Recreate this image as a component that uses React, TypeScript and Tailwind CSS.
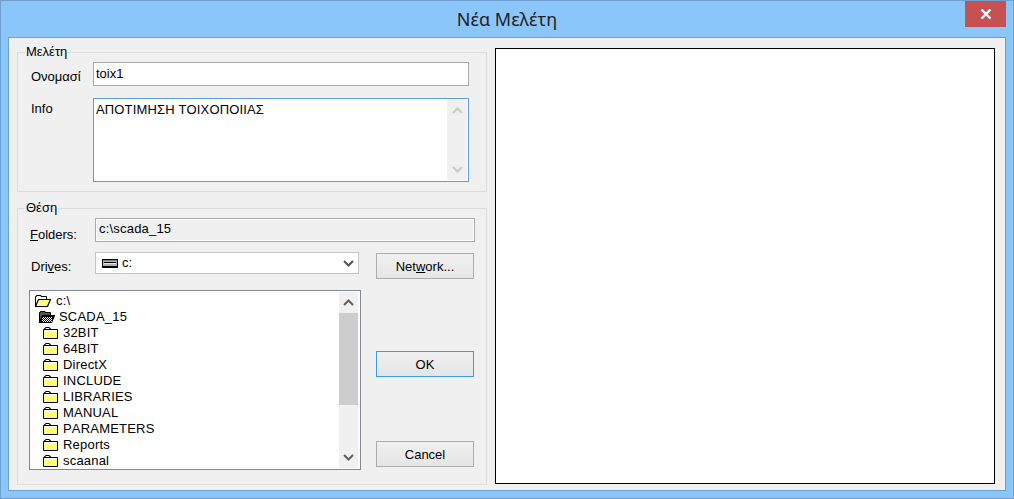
const FOLDERS = ["32BIT", "64BIT", "DirectX", "INCLUDE", "LIBRARIES", "MANUAL", "PARAMETERS", "Reports", "scaanal"];

function Chevron({ up, className }: { up?: boolean; className: string }) {
  return (
    <svg width="11" height="7" viewBox="0 0 11 7" className={className}>
      <path d={up ? "M1 6L5.5 1.5L10 6" : "M1 1L5.5 5.5L10 1"} fill="none" stroke="currentColor" strokeWidth="2" />
    </svg>
  );
}

// checkerboard fill for the dark open folder
function dots(x0: number, y0: number, w: number, h: number) {
  let d = "";
  for (let y = y0; y < y0 + h; y++) {
    for (let x = x0; x < x0 + w; x++) {
      if ((x + y) % 2 === 0) d += `M${x} ${y}h1v1h-1z`;
    }
  }
  return d;
}

function ClosedFolder() {
  return (
    <svg width="15" height="12" viewBox="0 0 15 12" className="shrink-0">
      <path d="M1.5 3V1.5H2.5V0.5H6.5V1.5H7.5V3" fill="#ffffff" stroke="#000" />
      <path d="M0.5 2.5H14.5V11.5H0.5Z" fill="#ffff80" stroke="#000" />
      <path d="M1 3.5H14" stroke="#fff" />
    </svg>
  );
}

function OpenFolder({ dark }: { dark?: boolean }) {
  return (
    <svg width="16" height="12" viewBox="0 0 16 12" className="shrink-0">
      <path d="M0.5 11.5V1.5H1.5V0.5H6V1.5H11.5V4.5" fill={dark ? "#555" : "#fff"} stroke="#000" />
      <path d="M0.5 11.5L3.5 4.5H15.5L12.5 11.5Z" fill={dark ? "#000" : "#ffff80"} stroke="#000" strokeWidth="1.2" />
      {dark && <path d={dots(3, 6, 10, 5)} fill="#ffffff" />}
    </svg>
  );
}

function DriveIcon() {
  return (
    <svg width="16" height="9" viewBox="0 0 16 9" shapeRendering="crispEdges" className="shrink-0">
      <rect x="0.5" y="0.5" width="15" height="8" fill="#b0b0b0" stroke="#000" />
      <path d="M2 3.5H14" stroke="#000" />
      <path d="M2 4.5H14" stroke="#e8e8e8" />
      <path d="M1 7.5H15" stroke="#000" />
      <path d="M1 1.5H15" stroke="#808080" />
    </svg>
  );
}

function Btn({ children, active, className }: { children: React.ReactNode; active?: boolean; className?: string }) {
  return (
    <button
      className={`block w-[98px] h-[26px] pt-[1px] text-[13px] text-black bg-gradient-to-b from-[#f0f0f0] to-[#e5e5e5] border ${active ? "border-[#3c9bf0]" : "border-[#acacac]"} ${className ?? ""}`}
    >
      {children}
    </button>
  );
}

export default function App() {
  return (
    <div className="w-[1014px] h-[499px] flex flex-col bg-[#8bc6fb] border border-[#6f9fd0] text-[13px] text-black font-['Liberation_Sans',sans-serif] [font-kerning:none] overflow-hidden">
      <div className="relative h-[36px] shrink-0 flex items-center justify-center">
        <span className="text-[18px] text-[#222] font-['Noto_Sans',sans-serif]">Νέα Μελέτη</span>
        <button className="absolute top-0 right-[7px] w-[41px] h-[26px] flex items-center justify-center bg-[#c75050]">
          <svg width="12" height="10" viewBox="0 0 12 10">
            <path d="M1.5 0.5L10.5 9.5M10.5 0.5L1.5 9.5" stroke="#fff" strokeWidth="2.4" fill="none" />
          </svg>
        </button>
      </div>

      <div className="mx-[7px] h-[454px] border border-[#6f9fd0] bg-[#f0f0f0] flex pl-[8px] pr-[9px] pt-[7px] gap-[8px]">
        <div className="w-[470px] shrink-0 flex flex-col gap-[9px]">
          <fieldset className="h-[147px] border border-[#dcdcdc]">
            <legend className="ml-[7px] px-[1px] leading-[14px]">Μελέτη</legend>
            <div className="pl-[13px]">
              <div className="flex h-[24px] mt-[3px]">
                <span className="w-[62px] pt-[5px]">Ονομασί</span>
                <input
                  readOnly
                  value="toix1"
                  className="w-[376px] h-[24px] border border-[#ababab] bg-white px-[2px] pb-[2px] outline-none"
                />
              </div>
              <div className="flex mt-[12px] h-[84px]">
                <span className="w-[62px] pt-[1px]">Info</span>
                <div className="w-[376px] h-[84px] border border-[#5b9bdf] bg-white flex justify-between pl-[2px]">
                  <span className="pt-[1px] tracking-[0.15px]">ΑΠΟΤΙΜΗΣΗ ΤΟΙΧΟΠΟΙΙΑΣ</span>
                  <div className="w-[20px] mt-[1px] mb-[1px] mr-[1px] bg-[#f0f0f0] flex flex-col items-center justify-between py-[7px] text-[#c8c8c8]">
                    <Chevron up className="block" />
                    <Chevron className="block" />
                  </div>
                </div>
              </div>
            </div>
          </fieldset>

          <fieldset className="h-[284px] border border-[#dcdcdc]">
            <legend className="ml-[7px] px-[1px] leading-[14px]">Θέση</legend>
            <div className="pl-[11px]">
              <div className="flex h-[24px] mt-[3px]">
                <span className="w-[66px] pt-[7px] pl-[1px]"><u>F</u>olders:</span>
                <div className="w-[380px] h-[24px] border border-[#ababab] bg-[#f0f0f0] pl-[3px] leading-[20px] tracking-[0.2px] shadow-[inset_0_0_0_1px_#fff]">c:\scada_15</div>
              </div>
              <div className="flex mt-[10px]">
                <div className="w-[332px] shrink-0">
                  <div className="flex h-[22px]">
                    <span className="w-[66px] pt-[5px] pl-[2px]">Dri<u>v</u>es:</span>
                    <div className="w-[264px] h-[22px] border border-[#c4c4c4] bg-white flex items-center pl-[6px] pr-[3px]">
                      <DriveIcon />
                      <span className="ml-[4px]">c:</span>
                      <Chevron className="ml-auto mr-[1px] text-[#555]" />
                    </div>
                  </div>
                  <div className="mt-[16px] h-[180px] border border-[#828790] bg-white flex justify-between p-[1px]">
                    <div className="pl-[4px] pt-[1px] overflow-hidden tracking-[0.2px] leading-[16px]">
                      <div className="h-[16px] flex items-center gap-[5px]">
                        <OpenFolder />
                        <span>c:\</span>
                      </div>
                      <div className="h-[16px] flex items-center gap-[4px] pl-[4px]">
                        <OpenFolder dark />
                        <span>SCADA_15</span>
                      </div>
                      {FOLDERS.map((name) => (
                        <div key={name} className="h-[16px] flex items-center gap-[5px] pl-[8px]">
                          <ClosedFolder />
                          <span>{name}</span>
                        </div>
                      ))}
                    </div>
                    <div className="w-[19px] mr-[1px] bg-[#f0f0f0] flex flex-col items-center text-[#606060]">
                      <div className="h-[21px] flex items-center justify-center"><Chevron up className="block" /></div>
                      <div className="w-full h-[92px] bg-[#cdcdcd]" />
                      <div className="mt-auto h-[21px] flex items-center justify-center"><Chevron className="block" /></div>
                    </div>
                  </div>
                </div>
                <div className="ml-[15px] pt-[1px]">
                  <Btn>Net<u>w</u>ork...</Btn>
                  <Btn active className="mt-[72px]">OK</Btn>
                  <Btn className="mt-[64px]">Cancel</Btn>
                </div>
              </div>
            </div>
          </fieldset>
        </div>

        <div className="mt-[3px] w-[500px] h-[436px] border border-black bg-white" />
      </div>
    </div>
  );
}
